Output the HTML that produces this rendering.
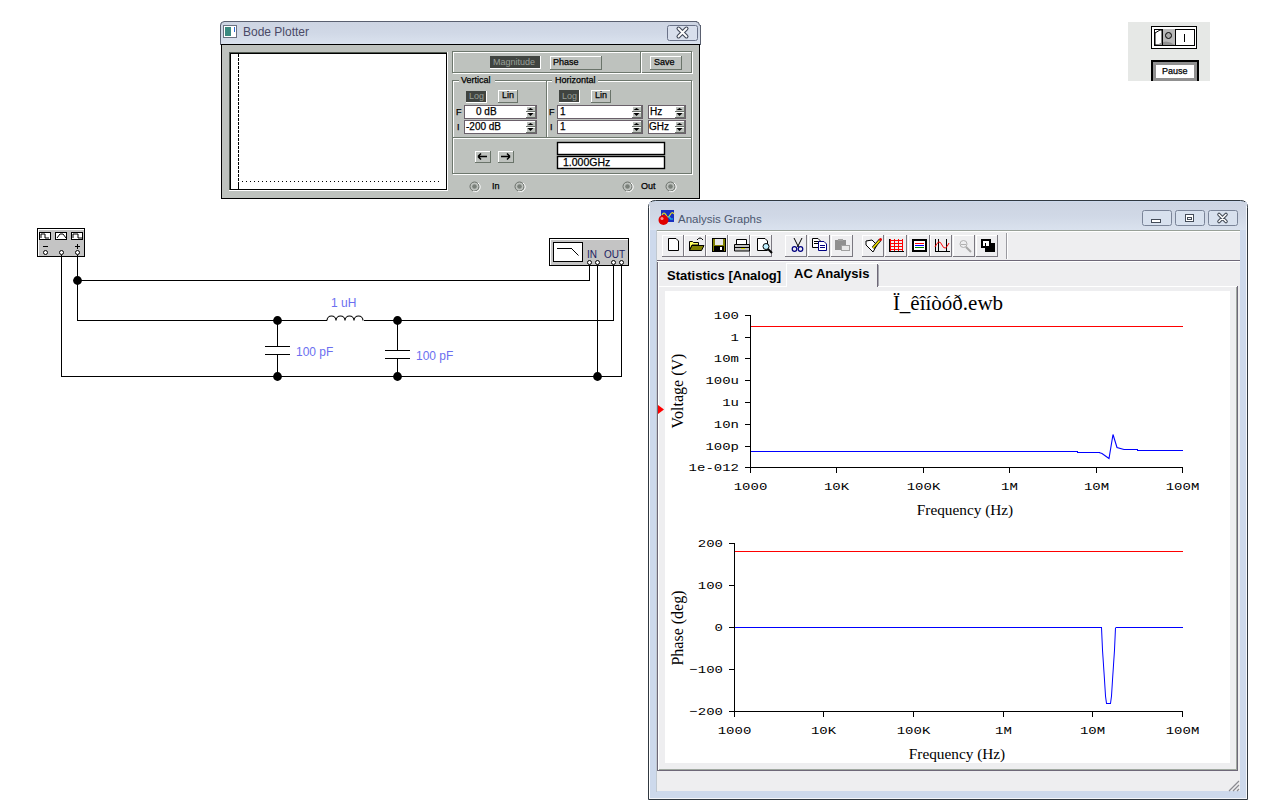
<!DOCTYPE html><html><head><meta charset="utf-8"><style>html,body{margin:0;padding:0;background:#fff;width:1264px;height:807px;overflow:hidden}svg{display:block}</style></head><body>
<svg width="1264" height="807" viewBox="0 0 1264 807" shape-rendering="crispEdges">
<rect x="0" y="0" width="1264" height="807" fill="#ffffff"/>
<defs><linearGradient id="tg" x1="0" y1="0" x2="0" y2="1"><stop offset="0" stop-color="#cdd4e2"/><stop offset="0.5" stop-color="#d0d8e6"/><stop offset="1" stop-color="#dae2ee"/></linearGradient></defs>
<path d="M220,44 L220,26 Q220,21 225,21 L695,21 Q700,21 700,26 L700,44 Z" fill="url(#tg)" stroke="none"/>
<rect x="224" y="21" width="473" height="1" fill="#5a6070"/>
<rect x="220" y="25" width="1" height="20" fill="#5a6070"/>
<rect x="700" y="25" width="1" height="20" fill="#5a6070"/>
<path d="M220.5,25.5 Q220.5,21.5 224.5,21.5 M695.5,21.5 Q699.5,21.5 699.5,25.5" fill="none" stroke="#5a6070" stroke-width="1" shape-rendering="auto"/>
<rect x="223" y="25" width="14" height="13" fill="#ffffff"/>
<rect x="223" y="25" width="14" height="1" fill="#6a7080"/>
<rect x="223" y="37" width="14" height="1" fill="#6a7080"/>
<rect x="223" y="25" width="1" height="13" fill="#6a7080"/>
<rect x="236" y="25" width="1" height="13" fill="#6a7080"/>
<rect x="225" y="27" width="6" height="9" fill="#3a8a80"/>
<rect x="234" y="27" width="1" height="5" fill="#2a6ad0"/>
<text x="243" y="36" font-family="Liberation Sans" font-size="12" fill="#4a4a66" text-anchor="start" font-weight="normal" >Bode Plotter</text>
<rect x="667.5" y="25.5" width="30" height="15" rx="2" fill="#d8dfec" stroke="#6a7288" shape-rendering="auto"/>
<path d="M678.5,28.5 L686.5,36.5 M686.5,28.5 L678.5,36.5" stroke="#404858" stroke-width="4" stroke-linecap="round" shape-rendering="auto"/>
<path d="M678.5,28.5 L686.5,36.5 M686.5,28.5 L678.5,36.5" stroke="#ffffff" stroke-width="1.8" stroke-linecap="round" shape-rendering="auto"/>
<rect x="221" y="44" width="479" height="155" fill="#bec2be"/>
<rect x="221" y="44" width="479" height="1" fill="#000000"/>
<rect x="221" y="198" width="479" height="1" fill="#000000"/>
<rect x="221" y="44" width="1" height="155" fill="#000000"/>
<rect x="699" y="44" width="1" height="155" fill="#000000"/>
<rect x="230" y="53" width="217" height="137" fill="#ffffff"/>
<rect x="230" y="53" width="217" height="1" fill="#000000"/>
<rect x="230" y="189" width="217" height="1" fill="#000000"/>
<rect x="230" y="53" width="1" height="137" fill="#000000"/>
<rect x="446" y="53" width="1" height="137" fill="#000000"/>
<rect x="229" y="52" width="219" height="1" fill="#505850"/>
<rect x="229" y="52" width="1" height="139" fill="#505850"/>
<rect x="229" y="190" width="219" height="1" fill="#ffffff"/>
<rect x="447" y="52" width="1" height="139" fill="#ffffff"/>
<rect x="238" y="54" width="1" height="3" fill="#000"/>
<rect x="238" y="58" width="1" height="3" fill="#000"/>
<rect x="238" y="62" width="1" height="3" fill="#000"/>
<rect x="238" y="66" width="1" height="3" fill="#000"/>
<rect x="238" y="70" width="1" height="3" fill="#000"/>
<rect x="238" y="74" width="1" height="3" fill="#000"/>
<rect x="238" y="78" width="1" height="3" fill="#000"/>
<rect x="238" y="82" width="1" height="3" fill="#000"/>
<rect x="238" y="86" width="1" height="3" fill="#000"/>
<rect x="238" y="90" width="1" height="3" fill="#000"/>
<rect x="238" y="94" width="1" height="3" fill="#000"/>
<rect x="238" y="98" width="1" height="3" fill="#000"/>
<rect x="238" y="102" width="1" height="3" fill="#000"/>
<rect x="238" y="106" width="1" height="3" fill="#000"/>
<rect x="238" y="110" width="1" height="3" fill="#000"/>
<rect x="238" y="114" width="1" height="3" fill="#000"/>
<rect x="238" y="118" width="1" height="3" fill="#000"/>
<rect x="238" y="122" width="1" height="3" fill="#000"/>
<rect x="238" y="126" width="1" height="3" fill="#000"/>
<rect x="238" y="130" width="1" height="3" fill="#000"/>
<rect x="238" y="134" width="1" height="3" fill="#000"/>
<rect x="238" y="138" width="1" height="3" fill="#000"/>
<rect x="238" y="142" width="1" height="3" fill="#000"/>
<rect x="238" y="146" width="1" height="3" fill="#000"/>
<rect x="238" y="150" width="1" height="3" fill="#000"/>
<rect x="238" y="154" width="1" height="3" fill="#000"/>
<rect x="238" y="158" width="1" height="3" fill="#000"/>
<rect x="238" y="162" width="1" height="3" fill="#000"/>
<rect x="238" y="166" width="1" height="3" fill="#000"/>
<rect x="238" y="170" width="1" height="3" fill="#000"/>
<rect x="238" y="174" width="1" height="3" fill="#000"/>
<rect x="238" y="178" width="1" height="3" fill="#000"/>
<rect x="238" y="182" width="1" height="7" fill="#000"/>
<rect x="242" y="181" width="1" height="1" fill="#000"/>
<rect x="246" y="181" width="1" height="1" fill="#000"/>
<rect x="250" y="181" width="1" height="1" fill="#000"/>
<rect x="254" y="181" width="1" height="1" fill="#000"/>
<rect x="258" y="181" width="1" height="1" fill="#000"/>
<rect x="262" y="181" width="1" height="1" fill="#000"/>
<rect x="266" y="181" width="1" height="1" fill="#000"/>
<rect x="270" y="181" width="1" height="1" fill="#000"/>
<rect x="274" y="181" width="1" height="1" fill="#000"/>
<rect x="278" y="181" width="1" height="1" fill="#000"/>
<rect x="282" y="181" width="1" height="1" fill="#000"/>
<rect x="286" y="181" width="1" height="1" fill="#000"/>
<rect x="290" y="181" width="1" height="1" fill="#000"/>
<rect x="294" y="181" width="1" height="1" fill="#000"/>
<rect x="298" y="181" width="1" height="1" fill="#000"/>
<rect x="302" y="181" width="1" height="1" fill="#000"/>
<rect x="306" y="181" width="1" height="1" fill="#000"/>
<rect x="310" y="181" width="1" height="1" fill="#000"/>
<rect x="314" y="181" width="1" height="1" fill="#000"/>
<rect x="318" y="181" width="1" height="1" fill="#000"/>
<rect x="322" y="181" width="1" height="1" fill="#000"/>
<rect x="326" y="181" width="1" height="1" fill="#000"/>
<rect x="330" y="181" width="1" height="1" fill="#000"/>
<rect x="334" y="181" width="1" height="1" fill="#000"/>
<rect x="338" y="181" width="1" height="1" fill="#000"/>
<rect x="342" y="181" width="1" height="1" fill="#000"/>
<rect x="346" y="181" width="1" height="1" fill="#000"/>
<rect x="350" y="181" width="1" height="1" fill="#000"/>
<rect x="354" y="181" width="1" height="1" fill="#000"/>
<rect x="358" y="181" width="1" height="1" fill="#000"/>
<rect x="362" y="181" width="1" height="1" fill="#000"/>
<rect x="366" y="181" width="1" height="1" fill="#000"/>
<rect x="370" y="181" width="1" height="1" fill="#000"/>
<rect x="374" y="181" width="1" height="1" fill="#000"/>
<rect x="378" y="181" width="1" height="1" fill="#000"/>
<rect x="382" y="181" width="1" height="1" fill="#000"/>
<rect x="386" y="181" width="1" height="1" fill="#000"/>
<rect x="390" y="181" width="1" height="1" fill="#000"/>
<rect x="394" y="181" width="1" height="1" fill="#000"/>
<rect x="398" y="181" width="1" height="1" fill="#000"/>
<rect x="402" y="181" width="1" height="1" fill="#000"/>
<rect x="406" y="181" width="1" height="1" fill="#000"/>
<rect x="410" y="181" width="1" height="1" fill="#000"/>
<rect x="414" y="181" width="1" height="1" fill="#000"/>
<rect x="418" y="181" width="1" height="1" fill="#000"/>
<rect x="422" y="181" width="1" height="1" fill="#000"/>
<rect x="426" y="181" width="1" height="1" fill="#000"/>
<rect x="430" y="181" width="1" height="1" fill="#000"/>
<rect x="434" y="181" width="1" height="1" fill="#000"/>
<rect x="438" y="181" width="1" height="1" fill="#000"/>
<rect x="453" y="52" width="240" height="1" fill="#ffffff"/>
<rect x="453" y="73" width="240" height="1" fill="#ffffff"/>
<rect x="453" y="52" width="1" height="22" fill="#ffffff"/>
<rect x="692" y="52" width="1" height="22" fill="#ffffff"/>
<rect x="452" y="51" width="240" height="1" fill="#6e786e"/>
<rect x="452" y="72" width="240" height="1" fill="#6e786e"/>
<rect x="452" y="51" width="1" height="22" fill="#6e786e"/>
<rect x="691" y="51" width="1" height="22" fill="#6e786e"/>
<rect x="640" y="52" width="1" height="21" fill="#6e786e"/>
<rect x="641" y="52" width="1" height="21" fill="#fff"/>
<rect x="453" y="81" width="240" height="1" fill="#ffffff"/>
<rect x="453" y="138" width="240" height="1" fill="#ffffff"/>
<rect x="453" y="81" width="1" height="58" fill="#ffffff"/>
<rect x="692" y="81" width="1" height="58" fill="#ffffff"/>
<rect x="452" y="80" width="240" height="1" fill="#6e786e"/>
<rect x="452" y="137" width="240" height="1" fill="#6e786e"/>
<rect x="452" y="80" width="1" height="58" fill="#6e786e"/>
<rect x="691" y="80" width="1" height="58" fill="#6e786e"/>
<rect x="546" y="81" width="1" height="57" fill="#6e786e"/>
<rect x="547" y="81" width="1" height="57" fill="#fff"/>
<rect x="453" y="138" width="240" height="1" fill="#ffffff"/>
<rect x="453" y="174" width="240" height="1" fill="#ffffff"/>
<rect x="453" y="138" width="1" height="37" fill="#ffffff"/>
<rect x="692" y="138" width="1" height="37" fill="#ffffff"/>
<rect x="452" y="137" width="240" height="1" fill="#6e786e"/>
<rect x="452" y="173" width="240" height="1" fill="#6e786e"/>
<rect x="452" y="137" width="1" height="37" fill="#6e786e"/>
<rect x="691" y="137" width="1" height="37" fill="#6e786e"/>
<rect x="459" y="76" width="36" height="8" fill="#bec2be"/>
<text x="461" y="83" font-family="Liberation Sans" font-size="9" fill="#000" text-anchor="start" font-weight="normal"  stroke="#000" stroke-width="0.25">Vertical</text>
<rect x="552" y="76" width="46" height="8" fill="#bec2be"/>
<text x="555" y="83" font-family="Liberation Sans" font-size="9" fill="#000" text-anchor="start" font-weight="normal"  stroke="#000" stroke-width="0.25">Horizontal</text>
<rect x="490" y="56" width="51" height="13" fill="#404440"/>
<rect x="490" y="68" width="51" height="1" fill="#ffffff"/>
<rect x="540" y="56" width="1" height="13" fill="#ffffff"/>
<text x="493" y="65" font-family="Liberation Sans" font-size="9" fill="#9aa09a" text-anchor="start" font-weight="normal" >Magnitude</text>
<rect x="550" y="56" width="52" height="14" fill="#bec2be"/>
<rect x="550" y="56" width="52" height="1" fill="#ffffff"/>
<rect x="550" y="56" width="1" height="14" fill="#ffffff"/>
<rect x="550" y="69" width="52" height="1" fill="#6a746a"/>
<rect x="601" y="56" width="1" height="14" fill="#6a746a"/>
<text x="553" y="65" font-family="Liberation Sans" font-size="9" fill="#000" text-anchor="start" font-weight="normal"  stroke="#000" stroke-width="0.25">Phase</text>
<rect x="650" y="56" width="32" height="14" fill="#bec2be"/>
<rect x="650" y="56" width="32" height="1" fill="#ffffff"/>
<rect x="650" y="56" width="1" height="14" fill="#ffffff"/>
<rect x="650" y="69" width="32" height="1" fill="#6a746a"/>
<rect x="681" y="56" width="1" height="14" fill="#6a746a"/>
<text x="654" y="65" font-family="Liberation Sans" font-size="9" fill="#000" text-anchor="start" font-weight="normal"  stroke="#000" stroke-width="0.25">Save</text>
<rect x="466" y="91" width="21" height="12" fill="#404440"/>
<rect x="466" y="102" width="21" height="1" fill="#ffffff"/>
<rect x="486" y="91" width="1" height="12" fill="#ffffff"/>
<text x="469" y="99" font-family="Liberation Sans" font-size="9" fill="#9aa09a" text-anchor="start" font-weight="normal" >Log</text>
<rect x="498" y="90" width="20" height="13" fill="#bec2be"/>
<rect x="498" y="90" width="20" height="1" fill="#ffffff"/>
<rect x="498" y="90" width="1" height="13" fill="#ffffff"/>
<rect x="498" y="102" width="20" height="1" fill="#6a746a"/>
<rect x="517" y="90" width="1" height="13" fill="#6a746a"/>
<text x="502" y="98" font-family="Liberation Sans" font-size="9" fill="#000" text-anchor="start" font-weight="normal"  stroke="#000" stroke-width="0.25">Lin</text>
<rect x="559" y="90" width="21" height="13" fill="#404440"/>
<rect x="559" y="102" width="21" height="1" fill="#ffffff"/>
<rect x="579" y="90" width="1" height="13" fill="#ffffff"/>
<text x="562" y="99" font-family="Liberation Sans" font-size="9" fill="#9aa09a" text-anchor="start" font-weight="normal" >Log</text>
<rect x="591" y="90" width="20" height="13" fill="#bec2be"/>
<rect x="591" y="90" width="20" height="1" fill="#ffffff"/>
<rect x="591" y="90" width="1" height="13" fill="#ffffff"/>
<rect x="591" y="102" width="20" height="1" fill="#6a746a"/>
<rect x="610" y="90" width="1" height="13" fill="#6a746a"/>
<text x="595" y="98" font-family="Liberation Sans" font-size="9" fill="#000" text-anchor="start" font-weight="normal"  stroke="#000" stroke-width="0.25">Lin</text>
<text x="456" y="115" font-family="Liberation Sans" font-size="9" fill="#000" text-anchor="start" font-weight="normal"  stroke="#000" stroke-width="0.25">F</text>
<text x="457" y="130" font-family="Liberation Sans" font-size="9" fill="#000" text-anchor="start" font-weight="normal"  stroke="#000" stroke-width="0.25">I</text>
<rect x="464" y="105" width="73" height="14" fill="#ffffff"/>
<rect x="464" y="105" width="73" height="1" fill="#6a606a"/>
<rect x="464" y="118" width="73" height="1" fill="#6a606a"/>
<rect x="464" y="105" width="1" height="14" fill="#6a606a"/>
<rect x="536" y="105" width="1" height="14" fill="#6a606a"/>
<rect x="526" y="106" width="10" height="12" fill="#bec2be"/>
<rect x="526" y="106" width="10" height="6" fill="#bec2be"/>
<rect x="526" y="106" width="10" height="1" fill="#ffffff"/>
<rect x="526" y="106" width="1" height="6" fill="#ffffff"/>
<rect x="526" y="111" width="10" height="1" fill="#6a706a"/>
<rect x="535" y="106" width="1" height="6" fill="#6a706a"/>
<rect x="526" y="112" width="10" height="6" fill="#bec2be"/>
<rect x="526" y="112" width="10" height="1" fill="#ffffff"/>
<rect x="526" y="112" width="1" height="6" fill="#ffffff"/>
<rect x="526" y="117" width="10" height="1" fill="#6a706a"/>
<rect x="535" y="112" width="1" height="6" fill="#6a706a"/>
<path d="M527.5,110 L533.5,110 L530.5,108 Z" fill="#000" shape-rendering="auto"/>
<path d="M527.5,113 L533.5,113 L530.5,116 Z" fill="#000" shape-rendering="auto"/>
<text x="476" y="115" font-family="Liberation Sans" font-size="10" fill="#000" text-anchor="start" font-weight="normal"  stroke="#000" stroke-width="0.25">0 dB</text>
<rect x="464" y="120" width="73" height="14" fill="#ffffff"/>
<rect x="464" y="120" width="73" height="1" fill="#6a606a"/>
<rect x="464" y="133" width="73" height="1" fill="#6a606a"/>
<rect x="464" y="120" width="1" height="14" fill="#6a606a"/>
<rect x="536" y="120" width="1" height="14" fill="#6a606a"/>
<rect x="526" y="121" width="10" height="12" fill="#bec2be"/>
<rect x="526" y="121" width="10" height="6" fill="#bec2be"/>
<rect x="526" y="121" width="10" height="1" fill="#ffffff"/>
<rect x="526" y="121" width="1" height="6" fill="#ffffff"/>
<rect x="526" y="126" width="10" height="1" fill="#6a706a"/>
<rect x="535" y="121" width="1" height="6" fill="#6a706a"/>
<rect x="526" y="127" width="10" height="6" fill="#bec2be"/>
<rect x="526" y="127" width="10" height="1" fill="#ffffff"/>
<rect x="526" y="127" width="1" height="6" fill="#ffffff"/>
<rect x="526" y="132" width="10" height="1" fill="#6a706a"/>
<rect x="535" y="127" width="1" height="6" fill="#6a706a"/>
<path d="M527.5,125 L533.5,125 L530.5,123 Z" fill="#000" shape-rendering="auto"/>
<path d="M527.5,128 L533.5,128 L530.5,131 Z" fill="#000" shape-rendering="auto"/>
<text x="466" y="130" font-family="Liberation Sans" font-size="10" fill="#000" text-anchor="start" font-weight="normal"  stroke="#000" stroke-width="0.25">-200 dB</text>
<text x="549" y="115" font-family="Liberation Sans" font-size="9" fill="#000" text-anchor="start" font-weight="normal"  stroke="#000" stroke-width="0.25">F</text>
<text x="550" y="130" font-family="Liberation Sans" font-size="9" fill="#000" text-anchor="start" font-weight="normal"  stroke="#000" stroke-width="0.25">I</text>
<rect x="557" y="105" width="86" height="14" fill="#ffffff"/>
<rect x="557" y="105" width="86" height="1" fill="#6a606a"/>
<rect x="557" y="118" width="86" height="1" fill="#6a606a"/>
<rect x="557" y="105" width="1" height="14" fill="#6a606a"/>
<rect x="642" y="105" width="1" height="14" fill="#6a606a"/>
<rect x="632" y="106" width="10" height="12" fill="#bec2be"/>
<rect x="632" y="106" width="10" height="6" fill="#bec2be"/>
<rect x="632" y="106" width="10" height="1" fill="#ffffff"/>
<rect x="632" y="106" width="1" height="6" fill="#ffffff"/>
<rect x="632" y="111" width="10" height="1" fill="#6a706a"/>
<rect x="641" y="106" width="1" height="6" fill="#6a706a"/>
<rect x="632" y="112" width="10" height="6" fill="#bec2be"/>
<rect x="632" y="112" width="10" height="1" fill="#ffffff"/>
<rect x="632" y="112" width="1" height="6" fill="#ffffff"/>
<rect x="632" y="117" width="10" height="1" fill="#6a706a"/>
<rect x="641" y="112" width="1" height="6" fill="#6a706a"/>
<path d="M633.5,110 L639.5,110 L636.5,108 Z" fill="#000" shape-rendering="auto"/>
<path d="M633.5,113 L639.5,113 L636.5,116 Z" fill="#000" shape-rendering="auto"/>
<text x="560" y="115" font-family="Liberation Sans" font-size="10" fill="#000" text-anchor="start" font-weight="normal"  stroke="#000" stroke-width="0.25">1</text>
<rect x="557" y="120" width="86" height="14" fill="#ffffff"/>
<rect x="557" y="120" width="86" height="1" fill="#6a606a"/>
<rect x="557" y="133" width="86" height="1" fill="#6a606a"/>
<rect x="557" y="120" width="1" height="14" fill="#6a606a"/>
<rect x="642" y="120" width="1" height="14" fill="#6a606a"/>
<rect x="632" y="121" width="10" height="12" fill="#bec2be"/>
<rect x="632" y="121" width="10" height="6" fill="#bec2be"/>
<rect x="632" y="121" width="10" height="1" fill="#ffffff"/>
<rect x="632" y="121" width="1" height="6" fill="#ffffff"/>
<rect x="632" y="126" width="10" height="1" fill="#6a706a"/>
<rect x="641" y="121" width="1" height="6" fill="#6a706a"/>
<rect x="632" y="127" width="10" height="6" fill="#bec2be"/>
<rect x="632" y="127" width="10" height="1" fill="#ffffff"/>
<rect x="632" y="127" width="1" height="6" fill="#ffffff"/>
<rect x="632" y="132" width="10" height="1" fill="#6a706a"/>
<rect x="641" y="127" width="1" height="6" fill="#6a706a"/>
<path d="M633.5,125 L639.5,125 L636.5,123 Z" fill="#000" shape-rendering="auto"/>
<path d="M633.5,128 L639.5,128 L636.5,131 Z" fill="#000" shape-rendering="auto"/>
<text x="560" y="130" font-family="Liberation Sans" font-size="10" fill="#000" text-anchor="start" font-weight="normal"  stroke="#000" stroke-width="0.25">1</text>
<rect x="648" y="105" width="38" height="14" fill="#ffffff"/>
<rect x="648" y="105" width="38" height="1" fill="#6a606a"/>
<rect x="648" y="118" width="38" height="1" fill="#6a606a"/>
<rect x="648" y="105" width="1" height="14" fill="#6a606a"/>
<rect x="685" y="105" width="1" height="14" fill="#6a606a"/>
<rect x="675" y="106" width="10" height="12" fill="#bec2be"/>
<rect x="675" y="106" width="10" height="6" fill="#bec2be"/>
<rect x="675" y="106" width="10" height="1" fill="#ffffff"/>
<rect x="675" y="106" width="1" height="6" fill="#ffffff"/>
<rect x="675" y="111" width="10" height="1" fill="#6a706a"/>
<rect x="684" y="106" width="1" height="6" fill="#6a706a"/>
<rect x="675" y="112" width="10" height="6" fill="#bec2be"/>
<rect x="675" y="112" width="10" height="1" fill="#ffffff"/>
<rect x="675" y="112" width="1" height="6" fill="#ffffff"/>
<rect x="675" y="117" width="10" height="1" fill="#6a706a"/>
<rect x="684" y="112" width="1" height="6" fill="#6a706a"/>
<path d="M676.5,110 L682.5,110 L679.5,108 Z" fill="#000" shape-rendering="auto"/>
<path d="M676.5,113 L682.5,113 L679.5,116 Z" fill="#000" shape-rendering="auto"/>
<text x="650" y="115" font-family="Liberation Sans" font-size="10" fill="#000" text-anchor="start" font-weight="normal"  stroke="#000" stroke-width="0.25">Hz</text>
<rect x="648" y="120" width="38" height="14" fill="#ffffff"/>
<rect x="648" y="120" width="38" height="1" fill="#6a606a"/>
<rect x="648" y="133" width="38" height="1" fill="#6a606a"/>
<rect x="648" y="120" width="1" height="14" fill="#6a606a"/>
<rect x="685" y="120" width="1" height="14" fill="#6a606a"/>
<rect x="675" y="121" width="10" height="12" fill="#bec2be"/>
<rect x="675" y="121" width="10" height="6" fill="#bec2be"/>
<rect x="675" y="121" width="10" height="1" fill="#ffffff"/>
<rect x="675" y="121" width="1" height="6" fill="#ffffff"/>
<rect x="675" y="126" width="10" height="1" fill="#6a706a"/>
<rect x="684" y="121" width="1" height="6" fill="#6a706a"/>
<rect x="675" y="127" width="10" height="6" fill="#bec2be"/>
<rect x="675" y="127" width="10" height="1" fill="#ffffff"/>
<rect x="675" y="127" width="1" height="6" fill="#ffffff"/>
<rect x="675" y="132" width="10" height="1" fill="#6a706a"/>
<rect x="684" y="127" width="1" height="6" fill="#6a706a"/>
<path d="M676.5,125 L682.5,125 L679.5,123 Z" fill="#000" shape-rendering="auto"/>
<path d="M676.5,128 L682.5,128 L679.5,131 Z" fill="#000" shape-rendering="auto"/>
<text x="649" y="130" font-family="Liberation Sans" font-size="10" fill="#000" text-anchor="start" font-weight="normal"  stroke="#000" stroke-width="0.25">GHz</text>
<rect x="475" y="151" width="16" height="12" fill="#bec2be"/>
<rect x="475" y="151" width="16" height="1" fill="#ffffff"/>
<rect x="475" y="151" width="1" height="12" fill="#ffffff"/>
<rect x="475" y="162" width="16" height="1" fill="#6a746a"/>
<rect x="490" y="151" width="1" height="12" fill="#6a746a"/>
<text x="0" y="158" font-family="Liberation Sans" font-size="9" fill="#000" text-anchor="start" font-weight="normal"  stroke="#000" stroke-width="0.25"></text>
<rect x="498" y="151" width="16" height="12" fill="#bec2be"/>
<rect x="498" y="151" width="16" height="1" fill="#ffffff"/>
<rect x="498" y="151" width="1" height="12" fill="#ffffff"/>
<rect x="498" y="162" width="16" height="1" fill="#6a746a"/>
<rect x="513" y="151" width="1" height="12" fill="#6a746a"/>
<text x="0" y="158" font-family="Liberation Sans" font-size="9" fill="#000" text-anchor="start" font-weight="normal"  stroke="#000" stroke-width="0.25"></text>
<path d="M478,156.5 L487,156.5 M478,156.5 L481,153.5 M478,156.5 L481,159.5" stroke="#000" stroke-width="1.5" fill="none" shape-rendering="auto"/>
<path d="M501,156.5 L510,156.5 M510,156.5 L507,153.5 M510,156.5 L507,159.5" stroke="#000" stroke-width="1.5" fill="none" shape-rendering="auto"/>
<rect x="557" y="142" width="108" height="13" fill="#fff"/>
<rect x="557.5" y="142.5" width="107" height="12" fill="none" stroke="#000" stroke-width="1.4" shape-rendering="auto"/>
<rect x="557" y="156" width="108" height="13" fill="#fff"/>
<rect x="557.5" y="156.5" width="107" height="12" fill="none" stroke="#000" stroke-width="1.4" shape-rendering="auto"/>
<text x="563" y="166" font-family="Liberation Sans" font-size="10.5" fill="#000" text-anchor="start" font-weight="normal"  stroke="#000" stroke-width="0.25">1.000GHz</text>
<circle cx="474.5" cy="186.5" r="4.5" fill="none" stroke="#6a706a" stroke-width="1" shape-rendering="auto"/>
<path d="M478,183 A4.5,4.5 0 0 1 473,191" fill="none" stroke="#fff" stroke-width="1" shape-rendering="auto"/>
<circle cx="474.5" cy="186.5" r="2.3" fill="#7a807a" shape-rendering="auto"/>
<circle cx="519.5" cy="186.5" r="4.5" fill="none" stroke="#6a706a" stroke-width="1" shape-rendering="auto"/>
<path d="M523,183 A4.5,4.5 0 0 1 518,191" fill="none" stroke="#fff" stroke-width="1" shape-rendering="auto"/>
<circle cx="519.5" cy="186.5" r="2.3" fill="#7a807a" shape-rendering="auto"/>
<circle cx="627.5" cy="186.5" r="4.5" fill="none" stroke="#6a706a" stroke-width="1" shape-rendering="auto"/>
<path d="M631,183 A4.5,4.5 0 0 1 626,191" fill="none" stroke="#fff" stroke-width="1" shape-rendering="auto"/>
<circle cx="627.5" cy="186.5" r="2.3" fill="#7a807a" shape-rendering="auto"/>
<circle cx="670.5" cy="186.5" r="4.5" fill="none" stroke="#6a706a" stroke-width="1" shape-rendering="auto"/>
<path d="M674,183 A4.5,4.5 0 0 1 669,191" fill="none" stroke="#fff" stroke-width="1" shape-rendering="auto"/>
<circle cx="670.5" cy="186.5" r="2.3" fill="#7a807a" shape-rendering="auto"/>
<text x="492" y="189" font-family="Liberation Sans" font-size="9" fill="#000" text-anchor="start" font-weight="normal"  stroke="#000" stroke-width="0.25">In</text>
<text x="641" y="189" font-family="Liberation Sans" font-size="9" fill="#000" text-anchor="start" font-weight="normal"  stroke="#000" stroke-width="0.25">Out</text>
<rect x="1128" y="22" width="82" height="59" fill="#e6e8e6"/>
<rect x="1151" y="26" width="46" height="23" fill="#fff"/>
<rect x="1151" y="26" width="46" height="1" fill="#000"/>
<rect x="1151" y="48" width="46" height="1" fill="#000"/>
<rect x="1151" y="26" width="1" height="23" fill="#000"/>
<rect x="1196" y="26" width="1" height="23" fill="#000"/>
<rect x="1154" y="29" width="41" height="1" fill="#000"/>
<rect x="1154" y="45" width="41" height="1" fill="#000"/>
<rect x="1154" y="29" width="1" height="17" fill="#000"/>
<rect x="1194" y="29" width="1" height="17" fill="#000"/>
<rect x="1162" y="29" width="13" height="16" fill="#b8b8b8"/>
<path d="M1155,45 L1155,33 L1160,30 L1162,30 L1162,45 Z" fill="#fff" stroke="#000" stroke-width="1" shape-rendering="auto"/>
<path d="M1157,45 Q1166,38 1175,45 Z" fill="#909090" shape-rendering="auto"/>
<rect x="1162" y="29" width="1" height="17" fill="#000"/>
<rect x="1175" y="29" width="1" height="17" fill="#000"/>
<circle cx="1168.5" cy="35.5" r="3" fill="#a8a8a8" stroke="#000" stroke-width="1" shape-rendering="auto"/>
<rect x="1184" y="34" width="1" height="8" fill="#000"/>
<rect x="1151" y="60" width="48" height="21" fill="#fff"/>
<rect x="1151" y="60" width="48" height="2" fill="#000"/>
<rect x="1151" y="60" width="2" height="21" fill="#000"/>
<rect x="1197" y="60" width="2" height="21" fill="#000"/>
<rect x="1153" y="62" width="44" height="3" fill="#909090"/>
<rect x="1153" y="62" width="3" height="19" fill="#909090"/>
<rect x="1194" y="62" width="3" height="19" fill="#909090"/>
<rect x="1153" y="78" width="44" height="3" fill="#909090"/>
<text x="1162" y="74" font-family="Liberation Sans" font-size="9" fill="#000" text-anchor="start" font-weight="normal"  stroke="#000" stroke-width="0.25">Pause</text>
<rect x="37" y="228" width="48" height="29" fill="#c4c4c4"/>
<rect x="37" y="228" width="48" height="1" fill="#000"/>
<rect x="37" y="256" width="48" height="1" fill="#000"/>
<rect x="37" y="228" width="1" height="29" fill="#000"/>
<rect x="84" y="228" width="1" height="29" fill="#000"/>
<rect x="38" y="229" width="46" height="1" fill="#fff"/>
<rect x="38" y="229" width="1" height="27" fill="#fff"/>
<rect x="39" y="232" width="12" height="8" fill="#fff"/>
<rect x="39" y="232" width="12" height="1" fill="#000"/>
<rect x="39" y="239" width="12" height="1" fill="#000"/>
<rect x="39" y="232" width="1" height="8" fill="#000"/>
<rect x="50" y="232" width="1" height="8" fill="#000"/>
<rect x="55" y="232" width="12" height="8" fill="#fff"/>
<rect x="55" y="232" width="12" height="1" fill="#000"/>
<rect x="55" y="239" width="12" height="1" fill="#000"/>
<rect x="55" y="232" width="1" height="8" fill="#000"/>
<rect x="66" y="232" width="1" height="8" fill="#000"/>
<rect x="71" y="232" width="12" height="8" fill="#fff"/>
<rect x="71" y="232" width="12" height="1" fill="#000"/>
<rect x="71" y="239" width="12" height="1" fill="#000"/>
<rect x="71" y="232" width="1" height="8" fill="#000"/>
<rect x="82" y="232" width="1" height="8" fill="#000"/>
<path d="M41,238 L41,234 L45,234 L45,238 L49,238" fill="none" stroke="#000" stroke-width="1" shape-rendering="auto"/>
<path d="M57,238 L60,234 L63,234 L66,238" fill="none" stroke="#000" stroke-width="1" shape-rendering="auto"/>
<path d="M73,238 L73,234 L78,234 L78,238 L82,238" fill="none" stroke="#000" stroke-width="1" shape-rendering="auto"/>
<rect x="43" y="246" width="5" height="1" fill="#000"/>
<rect x="75" y="246" width="5" height="1" fill="#000"/>
<rect x="77" y="244" width="1" height="5" fill="#000"/>
<circle cx="45.5" cy="252.5" r="2" fill="#fff" stroke="#000" stroke-width="1" shape-rendering="auto"/>
<circle cx="61.5" cy="252.5" r="2" fill="#fff" stroke="#000" stroke-width="1" shape-rendering="auto"/>
<circle cx="77.5" cy="252.5" r="2" fill="#fff" stroke="#000" stroke-width="1" shape-rendering="auto"/>
<rect x="61" y="255" width="1" height="122" fill="#000"/>
<rect x="77" y="255" width="1" height="66" fill="#000"/>
<rect x="77" y="280" width="513" height="1" fill="#000"/>
<rect x="589" y="265" width="1" height="16" fill="#000"/>
<rect x="77" y="320" width="537" height="1" fill="#000"/>
<rect x="61" y="376" width="561" height="1" fill="#000"/>
<rect x="597" y="265" width="1" height="112" fill="#000"/>
<rect x="613" y="265" width="1" height="56" fill="#000"/>
<rect x="621" y="265" width="1" height="112" fill="#000"/>
<rect x="327" y="318" width="37" height="5" fill="#fff"/>
<path d="M327,320.5 A4.5,4.5 0 0 1 336,320.5 A4.5,4.5 0 0 1 345,320.5 A4.5,4.5 0 0 1 354,320.5 A4.5,4.5 0 0 1 363,320.5" fill="none" stroke="#000" stroke-width="1.2" shape-rendering="auto"/>
<text x="331" y="307" font-family="Liberation Sans" font-size="12" fill="#6b6ff0" text-anchor="start" font-weight="normal" >1 uH</text>
<rect x="277" y="321" width="1" height="55" fill="#fff"/>
<rect x="277" y="320" width="1" height="27" fill="#000"/>
<rect x="277" y="354" width="1" height="23" fill="#000"/>
<rect x="265" y="346" width="25" height="1" fill="#000"/>
<rect x="265" y="354" width="25" height="1" fill="#000"/>
<rect x="397" y="321" width="1" height="55" fill="#fff"/>
<rect x="397" y="320" width="1" height="31" fill="#000"/>
<rect x="397" y="358" width="1" height="19" fill="#000"/>
<rect x="385" y="350" width="25" height="1" fill="#000"/>
<rect x="385" y="358" width="25" height="1" fill="#000"/>
<text x="296" y="356" font-family="Liberation Sans" font-size="12" fill="#6b6ff0" text-anchor="start" font-weight="normal" >100 pF</text>
<text x="416" y="360" font-family="Liberation Sans" font-size="12" fill="#6b6ff0" text-anchor="start" font-weight="normal" >100 pF</text>
<circle cx="77.5" cy="280.5" r="4.4" fill="#000" shape-rendering="auto"/>
<circle cx="277.5" cy="320.5" r="4.4" fill="#000" shape-rendering="auto"/>
<circle cx="397.5" cy="320.5" r="4.4" fill="#000" shape-rendering="auto"/>
<circle cx="277.5" cy="376.5" r="4.4" fill="#000" shape-rendering="auto"/>
<circle cx="397.5" cy="376.5" r="4.4" fill="#000" shape-rendering="auto"/>
<circle cx="597.5" cy="376.5" r="4.4" fill="#000" shape-rendering="auto"/>
<rect x="549" y="238" width="80" height="28" fill="#c4c4c4"/>
<rect x="549" y="238" width="80" height="1" fill="#000"/>
<rect x="549" y="265" width="80" height="1" fill="#000"/>
<rect x="549" y="238" width="1" height="28" fill="#000"/>
<rect x="628" y="238" width="1" height="28" fill="#000"/>
<rect x="550" y="239" width="78" height="1" fill="#fff"/>
<rect x="550" y="239" width="1" height="26" fill="#fff"/>
<rect x="553" y="242" width="30" height="20" fill="#fff"/>
<rect x="553" y="242" width="30" height="1" fill="#000"/>
<rect x="553" y="261" width="30" height="1" fill="#000"/>
<rect x="553" y="242" width="1" height="20" fill="#000"/>
<rect x="582" y="242" width="1" height="20" fill="#000"/>
<rect x="557" y="248" width="15" height="1" fill="#000"/>
<path d="M571.5,248.5 L578.5,255.5" stroke="#000" stroke-width="1" shape-rendering="auto"/>
<text x="587" y="258" font-family="Liberation Sans" font-size="10" fill="#202060" text-anchor="start" font-weight="normal" >IN</text>
<text x="604" y="258" font-family="Liberation Sans" font-size="10" fill="#202060" text-anchor="start" font-weight="normal" >OUT</text>
<circle cx="589.5" cy="262.5" r="2" fill="#fff" stroke="#000" stroke-width="1" shape-rendering="auto"/>
<circle cx="597.5" cy="262.5" r="2" fill="#fff" stroke="#000" stroke-width="1" shape-rendering="auto"/>
<circle cx="613.5" cy="262.5" r="2" fill="#fff" stroke="#000" stroke-width="1" shape-rendering="auto"/>
<circle cx="621.5" cy="262.5" r="2" fill="#fff" stroke="#000" stroke-width="1" shape-rendering="auto"/>
<path d="M648.5,799.5 L648.5,207.5 Q648.5,200.5 655.5,200.5 L1240.5,200.5 Q1247.5,200.5 1247.5,207.5 L1247.5,799.5 Z" fill="#cdd9ec" stroke="#303840" stroke-width="1" shape-rendering="auto"/>
<rect x="649" y="202" width="598" height="28" fill="url(#tg)"/>
<rect x="649" y="206" width="1" height="593" fill="#ffffff"/>
<rect x="1246" y="206" width="1" height="593" fill="#f4f6fa"/>
<rect x="649" y="798" width="598" height="1" fill="#f4f6fa"/>
<rect x="661" y="210" width="13" height="12" fill="#1830c0"/>
<path d="M662,215 Q664,211 666,215 T670,215 T674,214" fill="none" stroke="#e8e020" stroke-width="1.2" shape-rendering="auto"/>
<path d="M664,219 L667,219 L667,217 L670,217 L670,219 L673,219" fill="none" stroke="#20d0f0" stroke-width="1" shape-rendering="auto"/>
<circle cx="663.5" cy="220" r="5" fill="#e00000" shape-rendering="auto"/>
<circle cx="662" cy="218.5" r="1.5" fill="#ff9090" shape-rendering="auto"/>
<text x="678" y="223" font-family="Liberation Sans" font-size="11.5" fill="#4c5870" text-anchor="start" font-weight="normal" >Analysis Graphs</text>
<rect x="1142.5" y="210.5" width="29" height="15" rx="2" fill="#d8e1ee" stroke="#7a8498" shape-rendering="auto"/>
<rect x="1175.5" y="210.5" width="29" height="15" rx="2" fill="#d8e1ee" stroke="#7a8498" shape-rendering="auto"/>
<rect x="1208.5" y="210.5" width="29" height="15" rx="2" fill="#d8e1ee" stroke="#7a8498" shape-rendering="auto"/>
<rect x="1151.5" y="219.5" width="9" height="3" fill="#fff" stroke="#444c58" stroke-width="1" shape-rendering="auto"/>
<rect x="1185.5" y="214.5" width="8" height="7" fill="#fff" stroke="#444c58" stroke-width="1" shape-rendering="auto"/>
<rect x="1187.5" y="217.5" width="4" height="2" fill="none" stroke="#444c58" stroke-width="1" shape-rendering="auto"/>
<path d="M1219,214.5 L1226,221.5 M1226,214.5 L1219,221.5" stroke="#444c58" stroke-width="3.6" stroke-linecap="round" shape-rendering="auto"/>
<path d="M1219,214.5 L1226,221.5 M1226,214.5 L1219,221.5" stroke="#ffffff" stroke-width="1.5" stroke-linecap="round" shape-rendering="auto"/>
<rect x="657" y="231" width="583" height="560" fill="#eeeef0"/>
<rect x="656" y="230" width="584" height="1" fill="#98a098"/>
<rect x="657" y="231" width="583" height="1" fill="#ffffff"/>
<rect x="656" y="230" width="1" height="562" fill="#c0c8d0"/>
<rect x="657" y="260" width="583" height="1" fill="#6e6878"/>
<rect x="657" y="261" width="583" height="1" fill="#ffffff"/>
<rect x="662" y="235" width="21" height="21" fill="#eeeef0"/>
<rect x="662" y="235" width="21" height="1" fill="#ffffff"/>
<rect x="662" y="235" width="1" height="21" fill="#ffffff"/>
<rect x="662" y="256" width="21" height="1" fill="#7a7880"/>
<rect x="683" y="235" width="1" height="22" fill="#7a7880"/>
<rect x="684" y="235" width="21" height="21" fill="#eeeef0"/>
<rect x="684" y="235" width="21" height="1" fill="#ffffff"/>
<rect x="684" y="235" width="1" height="21" fill="#ffffff"/>
<rect x="684" y="256" width="21" height="1" fill="#7a7880"/>
<rect x="705" y="235" width="1" height="22" fill="#7a7880"/>
<rect x="706" y="235" width="21" height="21" fill="#eeeef0"/>
<rect x="706" y="235" width="21" height="1" fill="#ffffff"/>
<rect x="706" y="235" width="1" height="21" fill="#ffffff"/>
<rect x="706" y="256" width="21" height="1" fill="#7a7880"/>
<rect x="727" y="235" width="1" height="22" fill="#7a7880"/>
<rect x="728" y="235" width="21" height="21" fill="#eeeef0"/>
<rect x="728" y="235" width="21" height="1" fill="#ffffff"/>
<rect x="728" y="235" width="1" height="21" fill="#ffffff"/>
<rect x="728" y="256" width="21" height="1" fill="#7a7880"/>
<rect x="749" y="235" width="1" height="22" fill="#7a7880"/>
<rect x="750" y="235" width="21" height="21" fill="#eeeef0"/>
<rect x="750" y="235" width="21" height="1" fill="#ffffff"/>
<rect x="750" y="235" width="1" height="21" fill="#ffffff"/>
<rect x="750" y="256" width="21" height="1" fill="#7a7880"/>
<rect x="771" y="235" width="1" height="22" fill="#7a7880"/>
<rect x="785" y="235" width="21" height="21" fill="#eeeef0"/>
<rect x="785" y="235" width="21" height="1" fill="#ffffff"/>
<rect x="785" y="235" width="1" height="21" fill="#ffffff"/>
<rect x="785" y="256" width="21" height="1" fill="#7a7880"/>
<rect x="806" y="235" width="1" height="22" fill="#7a7880"/>
<rect x="808" y="235" width="21" height="21" fill="#eeeef0"/>
<rect x="808" y="235" width="21" height="1" fill="#ffffff"/>
<rect x="808" y="235" width="1" height="21" fill="#ffffff"/>
<rect x="808" y="256" width="21" height="1" fill="#7a7880"/>
<rect x="829" y="235" width="1" height="22" fill="#7a7880"/>
<rect x="831" y="235" width="21" height="21" fill="#eeeef0"/>
<rect x="831" y="235" width="21" height="1" fill="#ffffff"/>
<rect x="831" y="235" width="1" height="21" fill="#ffffff"/>
<rect x="831" y="256" width="21" height="1" fill="#7a7880"/>
<rect x="852" y="235" width="1" height="22" fill="#7a7880"/>
<rect x="862" y="235" width="21" height="21" fill="#eeeef0"/>
<rect x="862" y="235" width="21" height="1" fill="#ffffff"/>
<rect x="862" y="235" width="1" height="21" fill="#ffffff"/>
<rect x="862" y="256" width="21" height="1" fill="#7a7880"/>
<rect x="883" y="235" width="1" height="22" fill="#7a7880"/>
<rect x="885" y="235" width="21" height="21" fill="#eeeef0"/>
<rect x="885" y="235" width="21" height="1" fill="#ffffff"/>
<rect x="885" y="235" width="1" height="21" fill="#ffffff"/>
<rect x="885" y="256" width="21" height="1" fill="#7a7880"/>
<rect x="906" y="235" width="1" height="22" fill="#7a7880"/>
<rect x="908" y="235" width="21" height="21" fill="#eeeef0"/>
<rect x="908" y="235" width="21" height="1" fill="#ffffff"/>
<rect x="908" y="235" width="1" height="21" fill="#ffffff"/>
<rect x="908" y="256" width="21" height="1" fill="#7a7880"/>
<rect x="929" y="235" width="1" height="22" fill="#7a7880"/>
<rect x="930" y="235" width="21" height="21" fill="#eeeef0"/>
<rect x="930" y="235" width="21" height="1" fill="#ffffff"/>
<rect x="930" y="235" width="1" height="21" fill="#ffffff"/>
<rect x="930" y="256" width="21" height="1" fill="#7a7880"/>
<rect x="951" y="235" width="1" height="22" fill="#7a7880"/>
<rect x="953" y="235" width="21" height="21" fill="#eeeef0"/>
<rect x="953" y="235" width="21" height="1" fill="#ffffff"/>
<rect x="953" y="235" width="1" height="21" fill="#ffffff"/>
<rect x="953" y="256" width="21" height="1" fill="#7a7880"/>
<rect x="974" y="235" width="1" height="22" fill="#7a7880"/>
<rect x="976" y="235" width="21" height="21" fill="#eeeef0"/>
<rect x="976" y="235" width="21" height="1" fill="#ffffff"/>
<rect x="976" y="235" width="1" height="21" fill="#ffffff"/>
<rect x="976" y="256" width="21" height="1" fill="#7a7880"/>
<rect x="997" y="235" width="1" height="22" fill="#7a7880"/>
<rect x="1006" y="233" width="1" height="26" fill="#9a9aa0"/>
<rect x="1007" y="233" width="1" height="26" fill="#ffffff"/>
<path d="M668.5,238.5 L676,238.5 L678.5,241 L678.5,250.5 L668.5,250.5 Z" fill="#fff" stroke="#000" stroke-width="1" shape-rendering="auto"/>
<path d="M689.5,241.5 L692.5,241.5 L693.5,242.5 L698.5,242.5 L698.5,245 L692,245 L689.5,250.5 Z" fill="#ffff60" stroke="#000" stroke-width="1" shape-rendering="auto"/>
<path d="M689.5,250.5 L692,245.5 L704,245.5 L701.5,250.5 Z" fill="#808000" stroke="#000" stroke-width="1" shape-rendering="auto"/>
<path d="M697,240 Q700,236 703,240" fill="none" stroke="#000" stroke-width="1" shape-rendering="auto"/>
<rect x="712" y="238" width="14" height="14" fill="#000"/>
<rect x="713" y="239" width="12" height="12" fill="#808000"/>
<rect x="715" y="239" width="8" height="6" fill="#e8e8e8"/>
<rect x="714" y="246" width="10" height="5" fill="#000"/>
<rect x="720" y="247" width="2" height="3" fill="#fff"/>
<path d="M736.5,239.5 L746.5,239.5 L746.5,244.5 L736.5,244.5 Z" fill="#fff" stroke="#000" stroke-width="1" shape-rendering="auto"/>
<path d="M734.5,244.5 L749.5,244.5 L749.5,251 L734.5,251 Z" fill="#c0c0c0" stroke="#000" stroke-width="1" shape-rendering="auto"/>
<rect x="735" y="247" width="14" height="1" fill="#000"/>
<rect x="741" y="248" width="4" height="1" fill="#e0e000"/>
<path d="M757.5,238.5 L765,238.5 L767.5,241 L767.5,250.5 L757.5,250.5 Z" fill="#fff" stroke="#000" stroke-width="1" shape-rendering="auto"/>
<circle cx="766" cy="246.5" r="3" fill="#c0f0ff" stroke="#000" stroke-width="1" shape-rendering="auto"/>
<path d="M768,249 L772,253" stroke="#000" stroke-width="2" shape-rendering="auto"/>
<path d="M794,238 L798.5,247 M802,238 L797.5,247" stroke="#000" stroke-width="1" shape-rendering="auto"/>
<circle cx="794.5" cy="249" r="2.3" fill="none" stroke="#000080" stroke-width="1.2" shape-rendering="auto"/>
<circle cx="800.5" cy="249" r="2.3" fill="none" stroke="#000080" stroke-width="1.2" shape-rendering="auto"/>
<path d="M812.5,238.5 L818,238.5 L820.5,241 L820.5,247.5 L812.5,247.5 Z" fill="#fff" stroke="#000" stroke-width="1" shape-rendering="auto"/>
<rect x="814" y="241" width="5" height="1" fill="#000"/>
<rect x="814" y="243" width="5" height="1" fill="#000"/>
<path d="M818.5,241.5 L824,241.5 L826.5,244 L826.5,250.5 L818.5,250.5 Z" fill="#fff" stroke="#000080" stroke-width="1" shape-rendering="auto"/>
<rect x="820" y="245" width="5" height="1" fill="#000080"/>
<rect x="820" y="247" width="5" height="1" fill="#000080"/>
<rect x="835" y="240" width="11" height="10" fill="#909090"/>
<rect x="838" y="239" width="5" height="2" fill="#a0a0a0"/>
<rect x="841" y="245" width="9" height="6" fill="#e8e8e8"/>
<rect x="841" y="245" width="9" height="1" fill="#a0a0a0"/>
<rect x="841" y="250" width="9" height="1" fill="#a0a0a0"/>
<rect x="841" y="245" width="1" height="6" fill="#a0a0a0"/>
<rect x="849" y="245" width="1" height="6" fill="#a0a0a0"/>
<path d="M866,241 L872,240 L877,245 L873,252 L866,245 Z" fill="#fff" stroke="#000" stroke-width="1" shape-rendering="auto"/>
<path d="M873,248 L880,240" stroke="#000" stroke-width="3" shape-rendering="auto"/>
<path d="M873,248 L880,240" stroke="#f0e000" stroke-width="1.6" shape-rendering="auto"/>
<circle cx="880.5" cy="239.5" r="1.5" fill="#e00000" shape-rendering="auto"/>
<rect x="890" y="239" width="1" height="12" fill="#ff0000"/>
<rect x="894" y="239" width="1" height="12" fill="#ff0000"/>
<rect x="898" y="239" width="1" height="12" fill="#ff0000"/>
<rect x="902" y="239" width="1" height="12" fill="#ff0000"/>
<rect x="890" y="240" width="13" height="1" fill="#ff0000"/>
<rect x="890" y="243" width="13" height="1" fill="#ff0000"/>
<rect x="890" y="246" width="13" height="1" fill="#ff0000"/>
<rect x="890" y="249" width="13" height="1" fill="#ff0000"/>
<rect x="889" y="239" width="1" height="13" fill="#000"/>
<rect x="889" y="251" width="15" height="1" fill="#000"/>
<rect x="912" y="239" width="15" height="13" fill="#fff"/>
<rect x="912" y="239" width="15" height="1" fill="#000"/>
<rect x="912" y="251" width="15" height="1" fill="#000"/>
<rect x="912" y="239" width="1" height="13" fill="#000"/>
<rect x="926" y="239" width="1" height="13" fill="#000"/>
<rect x="913" y="240" width="13" height="1" fill="#000"/>
<rect x="913" y="250" width="13" height="1" fill="#000"/>
<rect x="913" y="240" width="1" height="11" fill="#000"/>
<rect x="925" y="240" width="1" height="11" fill="#000"/>
<rect x="915" y="243" width="9" height="1" fill="#ff0000"/>
<rect x="915" y="245" width="9" height="1" fill="#0000ff"/>
<rect x="915" y="247" width="9" height="1" fill="#008000"/>
<rect x="935" y="239" width="1" height="13" fill="#000"/>
<rect x="938" y="239" width="1" height="13" fill="#000"/>
<rect x="946" y="239" width="1" height="13" fill="#000"/>
<rect x="935" y="251" width="15" height="1" fill="#000"/>
<path d="M935,247 Q939,238 942,245 T949,243" fill="none" stroke="#ff0000" stroke-width="1" shape-rendering="auto"/>
<circle cx="963.5" cy="244" r="3.5" fill="none" stroke="#b0b0b0" stroke-width="1" shape-rendering="auto"/>
<path d="M966,247 L971,252" stroke="#a8a8a8" stroke-width="2" shape-rendering="auto"/>
<rect x="961" y="244" width="5" height="1" fill="#b0b0b0"/>
<rect x="981" y="239" width="10" height="9" fill="#000"/>
<rect x="983" y="241" width="6" height="5" fill="#fff"/>
<rect x="985" y="243" width="10" height="9" fill="#000"/>
<rect x="986" y="243" width="3" height="3" fill="#fff"/>
<rect x="987" y="243" width="2" height="3" fill="#fff"/>
<text x="667" y="280" font-family="Liberation Sans" font-size="13" fill="#000" text-anchor="start" font-weight="bold" >Statistics [Analog]</text>
<rect x="786" y="264" width="1" height="23" fill="#ffffff"/>
<rect x="786" y="263" width="92" height="1" fill="#ffffff"/>
<rect x="877" y="264" width="1" height="23" fill="#6e6878"/>
<rect x="878" y="265" width="1" height="22" fill="#a8a8b0"/>
<text x="794" y="278" font-family="Liberation Sans" font-size="13" fill="#000" text-anchor="start" font-weight="bold" >AC Analysis</text>
<rect x="658" y="286" width="129" height="1" fill="#ffffff"/>
<rect x="878" y="286" width="360" height="1" fill="#ffffff"/>
<rect x="657" y="262" width="1" height="509" fill="#6e6878"/>
<rect x="658" y="263" width="1" height="507" fill="#ffffff"/>
<rect x="657" y="770" width="581" height="1" fill="#6e6878"/>
<rect x="1237" y="286" width="1" height="485" fill="#6e6878"/>
<rect x="1236" y="287" width="1" height="483" fill="#a0a8a0"/>
<rect x="659" y="769" width="578" height="1" fill="#a0a8a0"/>
<rect x="665" y="291" width="565" height="472" fill="#ffffff"/>
<path d="M1229,791 L1239,781 M1233,791 L1239,785 M1237,791 L1239,789" stroke="#8a8a90" stroke-width="1.2" shape-rendering="auto"/>
<rect x="750" y="315" width="1" height="158" fill="#000"/>
<rect x="750" y="467" width="433" height="1" fill="#000"/>
<rect x="745" y="315" width="5" height="1" fill="#000"/>
<text transform="translate(739,319) scale(1,0.83)" font-family="Liberation Mono" font-size="14" fill="#000" text-anchor="end">100</text>
<rect x="745" y="337" width="5" height="1" fill="#000"/>
<text transform="translate(739,341) scale(1,0.83)" font-family="Liberation Mono" font-size="14" fill="#000" text-anchor="end">1</text>
<rect x="745" y="358" width="5" height="1" fill="#000"/>
<text transform="translate(739,362) scale(1,0.83)" font-family="Liberation Mono" font-size="14" fill="#000" text-anchor="end">10m</text>
<rect x="745" y="380" width="5" height="1" fill="#000"/>
<text transform="translate(739,384) scale(1,0.83)" font-family="Liberation Mono" font-size="14" fill="#000" text-anchor="end">100u</text>
<rect x="745" y="402" width="5" height="1" fill="#000"/>
<text transform="translate(739,406) scale(1,0.83)" font-family="Liberation Mono" font-size="14" fill="#000" text-anchor="end">1u</text>
<rect x="745" y="424" width="5" height="1" fill="#000"/>
<text transform="translate(739,428) scale(1,0.83)" font-family="Liberation Mono" font-size="14" fill="#000" text-anchor="end">10n</text>
<rect x="745" y="446" width="5" height="1" fill="#000"/>
<text transform="translate(739,450) scale(1,0.83)" font-family="Liberation Mono" font-size="14" fill="#000" text-anchor="end">100p</text>
<rect x="745" y="467" width="5" height="1" fill="#000"/>
<text transform="translate(739,471) scale(1,0.83)" font-family="Liberation Mono" font-size="14" fill="#000" text-anchor="end">1e-012</text>
<rect x="750" y="467" width="1" height="6" fill="#000"/>
<text transform="translate(750.5,490) scale(1,0.83)" font-family="Liberation Mono" font-size="14" fill="#000" text-anchor="middle">1000</text>
<rect x="836" y="467" width="1" height="6" fill="#000"/>
<text transform="translate(836.5,490) scale(1,0.83)" font-family="Liberation Mono" font-size="14" fill="#000" text-anchor="middle">10K</text>
<rect x="923" y="467" width="1" height="6" fill="#000"/>
<text transform="translate(923.5,490) scale(1,0.83)" font-family="Liberation Mono" font-size="14" fill="#000" text-anchor="middle">100K</text>
<rect x="1009" y="467" width="1" height="6" fill="#000"/>
<text transform="translate(1009.5,490) scale(1,0.83)" font-family="Liberation Mono" font-size="14" fill="#000" text-anchor="middle">1M</text>
<rect x="1096" y="467" width="1" height="6" fill="#000"/>
<text transform="translate(1096.5,490) scale(1,0.83)" font-family="Liberation Mono" font-size="14" fill="#000" text-anchor="middle">10M</text>
<rect x="1182" y="467" width="1" height="6" fill="#000"/>
<text transform="translate(1182.5,490) scale(1,0.83)" font-family="Liberation Mono" font-size="14" fill="#000" text-anchor="middle">100M</text>
<rect x="751" y="326" width="432" height="1" fill="#ff0000"/>
<rect x="751" y="451" width="327" height="1" fill="#0000ff"/>
<rect x="1077" y="452" width="23" height="1" fill="#0000ff"/>
<rect x="1137" y="450" width="46" height="1" fill="#0000ff"/>
<rect x="1124" y="449" width="14" height="1" fill="#0000ff"/>
<polyline points="1099,452.5 1102,453.5 1109,458.5 1113,434.5 1117,447.5 1124,449.5" fill="none" stroke="#0000ff" stroke-width="1.1" shape-rendering="auto"/>
<text x="948" y="310" font-family="Liberation Serif" font-size="21" fill="#000" text-anchor="middle" font-weight="normal" >Ï_êîíòóð.ewb</text>
<text x="965" y="515" font-family="Liberation Serif" font-size="15.3" fill="#000" text-anchor="middle" font-weight="normal" >Frequency (Hz)</text>
<text x="0" y="0" font-family="Liberation Serif" font-size="16" fill="#000" text-anchor="middle" font-weight="normal" transform="translate(683,391) rotate(-90)">Voltage (V)</text>
<path d="M658,405 L664,409.5 L658,414 Z" fill="#ff0000" shape-rendering="auto"/>
<rect x="734" y="543" width="1" height="174" fill="#000"/>
<rect x="734" y="711" width="449" height="1" fill="#000"/>
<rect x="729" y="543" width="5" height="1" fill="#000"/>
<text transform="translate(723,547) scale(1,0.83)" font-family="Liberation Mono" font-size="14" fill="#000" text-anchor="end">200</text>
<rect x="729" y="585" width="5" height="1" fill="#000"/>
<text transform="translate(723,589) scale(1,0.83)" font-family="Liberation Mono" font-size="14" fill="#000" text-anchor="end">100</text>
<rect x="729" y="627" width="5" height="1" fill="#000"/>
<text transform="translate(723,631) scale(1,0.83)" font-family="Liberation Mono" font-size="14" fill="#000" text-anchor="end">0</text>
<rect x="729" y="669" width="5" height="1" fill="#000"/>
<text transform="translate(723,673) scale(1,0.83)" font-family="Liberation Mono" font-size="14" fill="#000" text-anchor="end">&#8722;100</text>
<rect x="729" y="711" width="5" height="1" fill="#000"/>
<text transform="translate(723,715) scale(1,0.83)" font-family="Liberation Mono" font-size="14" fill="#000" text-anchor="end">&#8722;200</text>
<rect x="734" y="711" width="1" height="6" fill="#000"/>
<text transform="translate(734.5,734) scale(1,0.83)" font-family="Liberation Mono" font-size="14" fill="#000" text-anchor="middle">1000</text>
<rect x="823" y="711" width="1" height="6" fill="#000"/>
<text transform="translate(823.5,734) scale(1,0.83)" font-family="Liberation Mono" font-size="14" fill="#000" text-anchor="middle">10K</text>
<rect x="913" y="711" width="1" height="6" fill="#000"/>
<text transform="translate(913.5,734) scale(1,0.83)" font-family="Liberation Mono" font-size="14" fill="#000" text-anchor="middle">100K</text>
<rect x="1003" y="711" width="1" height="6" fill="#000"/>
<text transform="translate(1003.5,734) scale(1,0.83)" font-family="Liberation Mono" font-size="14" fill="#000" text-anchor="middle">1M</text>
<rect x="1092" y="711" width="1" height="6" fill="#000"/>
<text transform="translate(1092.5,734) scale(1,0.83)" font-family="Liberation Mono" font-size="14" fill="#000" text-anchor="middle">10M</text>
<rect x="1182" y="711" width="1" height="6" fill="#000"/>
<text transform="translate(1182.5,734) scale(1,0.83)" font-family="Liberation Mono" font-size="14" fill="#000" text-anchor="middle">100M</text>
<rect x="735" y="551" width="448" height="1" fill="#ff0000"/>
<rect x="735" y="627" width="367" height="1" fill="#0000ff"/>
<rect x="1116" y="627" width="67" height="1" fill="#0000ff"/>
<rect x="1106" y="703" width="5" height="1" fill="#0000ff"/>
<polyline points="1101.5,627.5 1102.5,650 1103.5,665 1104.5,680 1105.5,696 1106.5,703.5 M1110.5,703.5" fill="none" stroke="#0000ff" stroke-width="1" shape-rendering="auto"/>
<polyline points="1110.5,703.5 1111.5,696 1112.5,680 1113.5,665 1114.5,650 1115.5,627.5" fill="none" stroke="#0000ff" stroke-width="1" shape-rendering="auto"/>
<text x="957" y="759" font-family="Liberation Serif" font-size="15.3" fill="#000" text-anchor="middle" font-weight="normal" >Frequency (Hz)</text>
<text x="0" y="0" font-family="Liberation Serif" font-size="16" fill="#000" text-anchor="middle" font-weight="normal" transform="translate(683,628) rotate(-90)">Phase (deg)</text>
</svg></body></html>
